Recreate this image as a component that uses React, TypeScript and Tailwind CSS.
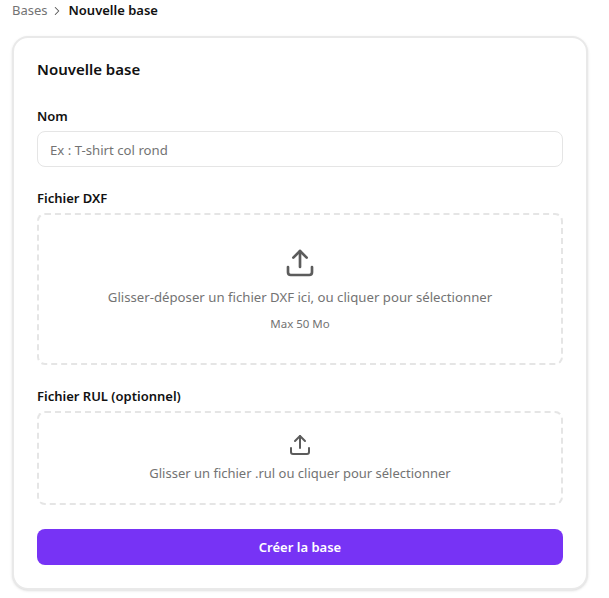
import { ChevronRight, Upload } from 'lucide-react';

const font = "font-['Noto_Sans','Open_Sans',sans-serif]";

export default function App() {
    return (
        <div className={`${font} h-[598px] w-[609px] overflow-hidden bg-white px-3`}>
            {/* Breadcrumb */}
            <div className="flex h-[21px] w-[576px] items-center text-[13px] leading-[21px]">
                <span className="text-[#737373]">Bases</span>
                <ChevronRight className="mr-[5px] ml-[2px] h-[14px] w-[14px] text-[#525252]" strokeWidth={1.75} />
                <span className="font-semibold text-[#111111]">Nouvelle base</span>
            </div>

            {/* Card */}
            <div className="mt-[15px] h-[554px] w-[576px] rounded-2xl border-2 border-[#e9e9e9] bg-white px-[23px] pt-[21px] shadow-sm">
                <h1 className="text-[15px] leading-5 font-semibold text-[#111111]">Nouvelle base</h1>

                <label className="mt-[27px] block text-[13px] leading-5 font-semibold text-[#111111]">Nom</label>
                <input
                    className="mt-[5px] block h-9 w-full rounded-lg border border-[#e5e5e5] px-3 pt-px text-[13.2px] outline-none placeholder:text-[#737373]"
                    placeholder="Ex : T-shirt col rond"
                />

                <label className="mt-[21px] block text-[13px] leading-5 font-semibold text-[#111111]">Fichier DXF</label>
                <div className="mt-[5px] flex h-[152px] w-full flex-col items-center justify-center rounded-lg border-2 border-dashed border-[#e5e5e5]">
                    <Upload className="h-8 w-8 text-[#5c5c5c]" strokeWidth={2} />
                    <p className="mt-2 text-[13.2px] leading-5 text-[#737373]">
                        Glisser-déposer un fichier DXF ici, ou cliquer pour sélectionner
                    </p>
                    <p className="mt-[9px] text-[11.5px] leading-4 text-[#737373]">Max 50 Mo</p>
                </div>

                <label className="mt-[21px] block text-[13px] leading-5 font-semibold text-[#111111]">Fichier RUL (optionnel)</label>
                <div className="mt-[5px] flex h-[94px] w-full flex-col items-center justify-center rounded-lg border-2 border-dashed border-[#e5e5e5] pb-px">
                    <Upload className="h-6 w-6 text-[#5c5c5c]" strokeWidth={2} />
                    <p className="mt-[6px] text-[13px] leading-5 text-[#737373]">
                        Glisser un fichier .rul ou cliquer pour sélectionner
                    </p>
                </div>

                <button className="mt-6 block h-9 w-full rounded-lg bg-[#7733f5] pt-px text-[13px] font-semibold text-white">
                    Créer la base
                </button>
            </div>
        </div>
    );
}
